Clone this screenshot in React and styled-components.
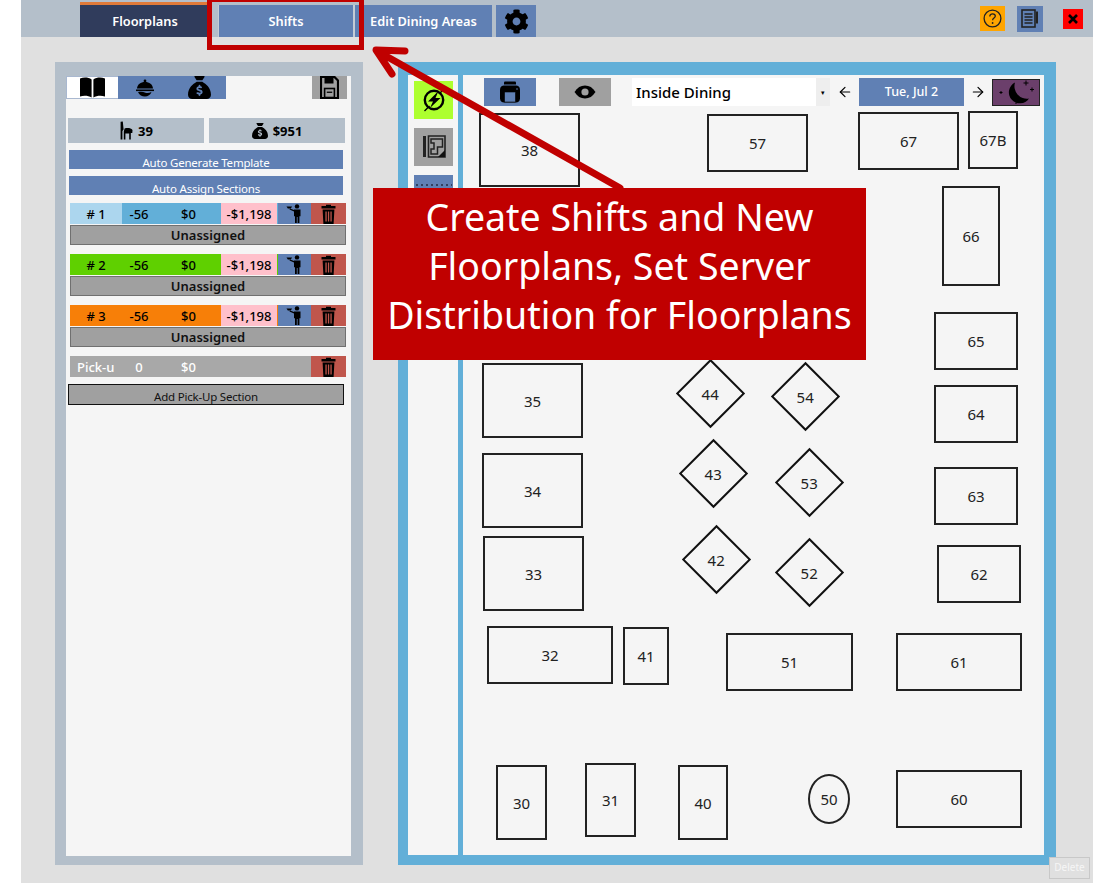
import styled, { createGlobalStyle } from 'styled-components';
import { FaCog } from 'react-icons/fa';
import { FaSackDollar } from 'react-icons/fa6';
import { ArrowLeft, ArrowRight } from 'lucide-react';

const GlobalStyle = createGlobalStyle`
  html, body {
    margin: 0;
    padding: 0;
    background: #ffffff;
    font-family: "Noto Sans", "Open Sans", sans-serif;
  }
  * { box-sizing: border-box; }
`;

const blue = '#6080b4';
const slate = '#b4bfca';
const paper = '#f5f5f5';
const sky = '#62afd8';
const red = '#c00000';

const Root = styled.div`
  position: relative;
  width: 1114px;
  height: 883px;
  padding: 0 21px;
  overflow: hidden;
`;

const Frame = styled.div`
  display: flex;
  flex-direction: column;
  height: 100%;
  background: #e0e0e0;
`;

const TopBar = styled.div`
  display: flex;
  align-items: flex-end;
  flex: none;
  height: 37px;
  padding-left: 59px;
  background: ${slate};
`;

const Tab = styled.div`
  display: flex;
  align-items: center;
  justify-content: center;
  width: ${p => p.$w}px;
  margin-left: ${p => p.$ml || 0}px;
  font-size: 12.8px;
  font-weight: 600;
  color: #ffffff;
  background: ${p => (p.$active ? '#303c5c' : blue)};
  border-top: ${p => (p.$active ? '3px solid #e07a3a' : 'none')};
  height: ${p => (p.$active ? 35 : 32)}px;
  border-left: ${p => (p.$framed ? '1px solid #c4ccd6' : 'none')};
  border-right: ${p => (p.$framed ? '2px solid #c4ccd6' : 'none')};
`;

const GearTab = styled(Tab)`
  color: #000000;
  font-size: 25px;
`;

const RightTools = styled.div`
  display: flex;
  align-items: center;
  align-self: stretch;
  margin-left: auto;
  padding-right: 10px;
`;

const ToolButton = styled.div`
  display: flex;
  align-items: center;
  justify-content: center;
  width: ${p => p.$size}px;
  height: ${p => p.$size}px;
  margin-left: ${p => p.$ml}px;
  background: ${p => p.$bg};
`;

const Workspace = styled.div`
  display: flex;
  flex: 1;
  gap: 35px;
  padding: 25px 37px 18px 34px;
  min-height: 0;
`;

const LeftPanel = styled.div`
  width: 308px;
  padding: 14px 12px 9px 11px;
  background: ${slate};
`;

const LeftInner = styled.div`
  height: 100%;
  background: ${paper};
`;

const TabRow = styled.div`
  display: flex;
  height: 23px;
  padding-right: 4px;
`;

const BookTab = styled.div`
  display: flex;
  align-items: center;
  justify-content: center;
  width: 52px;
  background: #ffffff;
  border: 1px solid #a9b8d0;
  border-right: none;
`;

const IconTabs = styled.div`
  display: flex;
  align-items: center;
  width: 108px;
  background: ${blue};
`;

const IconTab = styled.div`
  display: flex;
  justify-content: center;
  width: 54px;
  font-size: 23px;
  color: #000000;
`;

const SaveButton = styled.div`
  display: flex;
  align-items: center;
  justify-content: center;
  width: 35px;
  margin-left: auto;
  background: #a0a0a0;
`;

const StatsRow = styled.div`
  display: flex;
  gap: 5px;
  margin: 19px 6px 0 2px;
`;

const Stat = styled.div`
  display: flex;
  flex: 1;
  align-items: center;
  justify-content: center;
  gap: 5px;
  height: 25px;
  font-size: 13px;
  font-weight: 700;
  color: #000000;
  background: ${slate};
`;

const ActionButton = styled.div`
  width: 274px;
  height: 19px;
  margin: 7px 0 0 3px;
  overflow: hidden;
  font-size: 11.5px;
  letter-spacing: -0.2px;
  line-height: 25px;
  text-align: center;
  color: #ffffff;
  background: ${blue};
`;

const Sections = styled.div`
  display: flex;
  flex-direction: column;
  gap: 9px;
  margin: 8px 0 0 4px;
  width: 276px;
`;

const SectionRow = styled.div`
  display: grid;
  grid-template-columns: 52px 34px 65px 56px 1px 33px 35px;
  height: 21px;
  font-size: 13px;
  font-weight: 500;
  color: ${p => p.$fg || '#000000'};
  background: ${p => p.$bg};
`;

const Cell = styled.div`
  display: flex;
  align-items: center;
  justify-content: ${p => p.$align || 'center'};
  padding-left: ${p => p.$pl || 0}px;
  overflow: hidden;
  white-space: nowrap;
  background: ${p => p.$bg || 'transparent'};
`;

const AssignBar = styled.div`
  height: 20px;
  margin-top: 1px;
  font-size: 13px;
  font-weight: 600;
  line-height: 19px;
  text-align: center;
  color: #111111;
  background: #a0a0a0;
  border: 1px solid #707070;
`;

const AddButton = styled.div`
  width: 276px;
  height: 21px;
  margin: 7px 0 0 2px;
  overflow: hidden;
  font-size: 11.5px;
  letter-spacing: -0.2px;
  line-height: 24px;
  text-align: center;
  color: #111111;
  background: #a0a0a0;
  border: 1px solid #111111;
`;

const RightPanel = styled.div`
  display: flex;
  gap: 5px;
  width: 658px;
  padding: 13px 12px 10px 10px;
  background: ${sky};
`;

const SideColumn = styled.div`
  display: flex;
  flex-direction: column;
  gap: 9px;
  width: 50px;
  padding: 6px 0 0 6px;
  background: ${paper};
`;

const SideButton = styled.div`
  display: flex;
  align-items: center;
  justify-content: center;
  width: 39px;
  height: 38px;
  background: ${p => p.$bg};
`;

const SideStub = styled(SideButton)`
  align-items: flex-start;
  padding-top: 9px;
`;

const StubText = styled.div`
  width: 36px;
  height: 2px;
  background: repeating-linear-gradient(90deg, #33415f 0 2px, transparent 2px 5px);
`;

const Canvas = styled.div`
  display: flex;
  flex: 1;
  flex-direction: column;
  background: ${paper};
`;

const Toolbar = styled.div`
  display: flex;
  flex: none;
  align-items: center;
  height: 32px;
  padding: 3px 0 1px 21px;
`;

const BarButton = styled.div`
  display: flex;
  align-items: center;
  justify-content: center;
  width: 52px;
  height: 28px;
  margin-left: ${p => p.$ml || 0}px;
  background: ${p => p.$bg};
`;

const AreaSelect = styled.div`
  display: flex;
  align-items: center;
  justify-content: space-between;
  width: 198px;
  height: 28px;
  margin-left: 21px;
  padding-left: 4px;
  font-size: 15px;
  font-weight: 500;
  color: #000000;
  background: #ffffff;
`;

const SelectCaret = styled.div`
  display: flex;
  align-items: center;
  justify-content: center;
  align-self: stretch;
  width: 14px;
  font-size: 7px;
  background: #eeeeee;
`;

const StepArrow = styled.div`
  display: flex;
  justify-content: center;
  width: ${p => p.$w}px;
  color: #000000;
`;

const DateButton = styled.div`
  width: 105px;
  height: 28px;
  font-size: 12.5px;
  font-weight: 500;
  line-height: 28px;
  text-align: center;
  color: #ffffff;
  background: ${blue};
`;

const NightButton = styled.div`
  display: flex;
  align-items: center;
  justify-content: center;
  width: 48px;
  height: 27px;
  background: #6b3f6b;
  border: 1px solid #222222;
`;

const Floor = styled.div`
  position: relative;
  flex: 1;
`;

const Table = styled.div`
  position: absolute;
  left: ${p => p.$x}px;
  top: ${p => p.$y}px;
  display: flex;
  align-items: center;
  justify-content: center;
  width: ${p => p.$w}px;
  height: ${p => p.$h}px;
  font-size: 15px;
  color: #222222;
  border: 2px solid #222222;
  border-radius: ${p => (p.$round ? '50%' : '0')};
`;

const Diamond = styled.div`
  position: absolute;
  left: ${p => p.$x - 24.5}px;
  top: ${p => p.$y - 24.5}px;
  display: flex;
  align-items: center;
  justify-content: center;
  width: 49px;
  height: 49px;
  border: 2px solid #111111;
  transform: rotate(45deg);
`;

const DiamondLabel = styled.span`
  font-size: 15px;
  color: #222222;
  transform: rotate(-45deg);
`;

const Callout = styled.div`
  position: absolute;
  left: 373px;
  top: 188px;
  display: flex;
  align-items: center;
  justify-content: center;
  width: 493px;
  height: 172px;
  padding-bottom: 18px;
  font-size: 37.5px;
  line-height: 49px;
  text-align: center;
  color: #ffffff;
  background: ${red};
`;

const HighlightBox = styled.div`
  position: absolute;
  left: 207px;
  top: -3px;
  width: 157px;
  height: 53px;
  border: 5px solid ${red};
`;

const ArrowLayer = styled.svg`
  position: absolute;
  left: 0;
  top: 0;
  pointer-events: none;
`;

const DeleteButton = styled.div`
  position: absolute;
  left: 1049px;
  top: 857px;
  width: 41px;
  height: 22px;
  font-size: 10px;
  line-height: 19px;
  text-align: center;
  color: #f6f6f6;
  background: #e0e0e0;
  border: 1px solid #c8c8c8;
`;

const FLOOR_X = 463;
const FLOOR_Y = 108;

const tables = [
  ['38', 479, 114, 101, 74],
  ['57', 707, 115, 101, 58],
  ['67', 858, 113, 101, 58],
  ['67B', 968, 112, 50, 58],
  ['66', 942, 187, 58, 100],
  ['65', 934, 313, 84, 58],
  ['64', 934, 386, 84, 58],
  ['63', 934, 468, 84, 58],
  ['62', 937, 546, 84, 58],
  ['61', 896, 634, 126, 58],
  ['60', 896, 771, 126, 58],
  ['51', 726, 634, 127, 58],
  ['41', 623, 628, 46, 58],
  ['32', 487, 627, 126, 58],
  ['33', 483, 537, 101, 75],
  ['34', 482, 454, 101, 75],
  ['35', 482, 364, 101, 75],
  ['30', 496, 766, 51, 75],
  ['31', 585, 764, 51, 74],
  ['40', 678, 766, 50, 75],
];

const diamonds = [
  ['44', 710, 394],
  ['54', 805, 397],
  ['43', 713, 474],
  ['53', 809, 483],
  ['42', 716, 560],
  ['52', 809, 573],
];

const sections = [
  { label: '# 1', bg: sky, labelBg: '#acd6ee' },
  { label: '# 2', bg: '#5fd000' },
  { label: '# 3', bg: '#f77f08' },
];

const BookIcon = () => (
  <svg width="27" height="21" viewBox="0 0 27 21">
    <path d="M1 1.5C5 0 9.5 .3 12.6 2.5V20.5C9.5 18.6 5 18.4 1 19.4Z" fill="#000" />
    <path d="M26 1.5C22 0 17.5 .3 14.4 2.5V20.5C17.5 18.6 22 18.4 26 19.4Z" fill="#000" />
  </svg>
);

const ClocheIcon = () => (
  <svg width="20" height="20" viewBox="0 0 20 20">
    <circle cx="10" cy="3" r="1.4" fill="#000" />
    <path d="M2 10.5C2.4 6.3 5.6 4 10 4s7.6 2.3 8 6.5Z" fill="#000" />
    <rect x="1" y="11.5" width="18" height="1.6" fill="#000" />
    <path d="M3 14.2c3-.8 5-.4 7.5.5 2 .7 3.8.3 6-.7-1 2.8-3.6 4.5-6.6 4.5-3 0-5.6-1.6-6.9-4.3Z" fill="#000" />
  </svg>
);

const SaveIcon = () => (
  <svg width="19" height="23" viewBox="0 0 19 23">
    <path d="M2 1h12.5L18 4.5V22H1V1Z" fill="none" stroke="#000" strokeWidth="2.2" />
    <path d="M4.5 1h9v6.5h-9Z" fill="#000" />
    <rect x="4.6" y="12.5" width="9.8" height="9" fill="none" stroke="#000" strokeWidth="1.6" />
    <rect x="6.8" y="15.6" width="5.4" height="1.3" fill="#000" />
  </svg>
);

const ChairIcon = () => (
  <svg width="14" height="19" viewBox="0 0 14 19">
    <path d="M1.6.8 3.8.4 4.6 8.4 3.4 10V18.6H1.6V9.6Z" fill="#000" />
    <path d="M5.6 7.6c3-1 6.4-.4 7.9 1.4l-.2 3H11.8V18.6h-1.6V12.4H6.4v6.2H4.8V10.4Z" fill="#000" />
  </svg>
);

const TrashIcon = () => (
  <svg width="15" height="20" viewBox="0 0 15 20">
    <path d="M5 2V.8h5V2h4.5v2.4H.5V2Z" fill="#000" />
    <path d="M1.6 5.4h11.8L12.6 20H2.4ZM4.4 7.6v10h1.3v-10ZM6.9 7.6v10h1.3v-10ZM9.4 7.6v10h1.3v-10Z" fill="#000" fillRule="evenodd" />
  </svg>
);

const PrintIcon = () => (
  <svg width="22" height="22" viewBox="0 0 22 22">
    <path d="M5 1.5C5 .8 5.6.4 6.3.4h9.4c.7 0 1.3.4 1.3 1.1V3.4H5Z" fill="#000" />
    <path d="M1 8.5C1 6 3 4.6 5 4.6h12c2 0 4 1.4 4 3.9v9c0 2.4-1.9 4-4 4H5c-2.1 0-4-1.6-4-4Z" fill="#000" />
    <rect x="5.5" y="11" width="11" height="10" fill="#6080b4" stroke="#000" strokeWidth=".6" />
    <circle cx="18" cy="8" r=".8" fill="#6080b4" />
  </svg>
);

const EyeIcon = () => (
  <svg width="22" height="14" viewBox="0 0 22 14">
    <path d="M.5 7C3.2 2.6 6.8.5 11 .5s7.8 2.1 10.5 6.5c-2.7 4.4-6.3 6.5-10.5 6.5S3.2 11.4.5 7Z" fill="#000" />
    <circle cx="11" cy="7" r="3.6" fill="#a0a0a0" />
  </svg>
);

const BoltIcon = () => (
  <svg width="26" height="28" viewBox="0 0 26 28">
    <circle cx="13" cy="14" r="9.2" fill="none" stroke="#000" strokeWidth="2.4" />
    <path d="M17.5 5 7 15.5h5L9 22 19.5 12h-5Z" fill="#000" />
    <path d="M3.5 25 8.5 20M18 8 23 3" stroke="#000" strokeWidth="1.4" />
  </svg>
);

const PlanIcon = () => (
  <svg width="24" height="26" viewBox="0 0 24 26">
    <rect x="1" y="2" width="3" height="21" fill="#222" />
    <path d="M6.5 2h16.5v21H6.5Z" fill="none" stroke="#222" strokeWidth="1.6" />
    <path d="M9 5h11.5v8h-5v7H9v-5h3V9H9Z" fill="none" stroke="#222" strokeWidth="1.5" />
    <path d="M23 16v7h-7Z" fill="#111" />
  </svg>
);

const MoonIcon = () => (
  <svg width="46" height="25" viewBox="0 0 46 25">
    <path d="M22 2.5a11 11 0 1 0 14 16 12.5 12.5 0 0 1-14-16Z" fill="#000" />
    <path d="M33 .5v5M30.5 3h5M39 7.5v4M37 9.500h4M8 11v3M6.500 12.500h3M23 22.500v1.500" stroke="#000" strokeWidth="1" />
  </svg>
);

const HelpIcon = () => (
  <svg width="19" height="19" viewBox="0 0 19 19">
    <circle cx="9.5" cy="9.5" r="8.4" fill="none" stroke="#222" strokeWidth="1.3" />
    <path d="M6.8 7.4c0-1.6 1.2-2.6 2.8-2.6s2.7 1 2.7 2.3c0 2-2.7 2-2.7 4.2" fill="none" stroke="#222" strokeWidth="1.3" />
    <circle cx="9.6" cy="14" r=".9" fill="#222" />
  </svg>
);

const NotesIcon = () => (
  <svg width="20" height="21" viewBox="0 0 20 21">
    <rect x="2" y="2" width="13" height="17" fill="none" stroke="#222" strokeWidth="1.6" />
    <path d="M4.5 6h8M4.5 9h8M4.5 12h8M4.5 15h8" stroke="#222" strokeWidth="1.4" />
    <path d="M17 3.5v12" stroke="#222" strokeWidth="2" />
  </svg>
);

const CloseIcon = () => (
  <svg width="10" height="10" viewBox="0 0 10 10">
    <path d="M1 1 9 9M9 1 1 9" stroke="#000" strokeWidth="2.6" />
  </svg>
);

const ServerIcon = () => (
  <svg width="18" height="19" viewBox="0 0 18 19">
    <circle cx="11" cy="2.4" r="2.2" fill="#000" />
    <path d="M8 5.4h6.5v6.8h-1.1V19h-1.8v-6h-.8v6H9v-6.8H8Z" fill="#000" />
    <path d="M8 6 4 4.4l-.5 1.2 4.5 2Z" fill="#000" />
    <path d="M.5 2.4h5.6L4.8 4.6H1.8Z" fill="#000" />
  </svg>
);

function SectionCard({ section }) {
  return (
    <div>
      <SectionRow $bg={section.bg}>
        <Cell $bg={section.labelBg}>{section.label}</Cell>
        <Cell>-56</Cell>
        <Cell>$0</Cell>
        <Cell $bg="#ffc0cb">-$1,198</Cell>
        <span />
        <Cell $bg={blue}>
          <ServerIcon />
        </Cell>
        <Cell $bg="#c0564c">
          <TrashIcon />
        </Cell>
      </SectionRow>
      <AssignBar>Unassigned</AssignBar>
    </div>
  );
}

export default function App() {
  return (
    <Root>
      <GlobalStyle />
      <Frame>
        <TopBar>
          <Tab $w={130} $active>Floorplans</Tab>
          <Tab $w={137} $ml={8} $framed>Shifts</Tab>
          <Tab $w={137}>Edit Dining Areas</Tab>
          <GearTab $w={40} $ml={4}>
            <FaCog />
          </GearTab>
          <RightTools>
            <ToolButton $size={25} $ml={0} $bg="#ffa500">
              <HelpIcon />
            </ToolButton>
            <ToolButton $size={26} $ml={12} $bg={blue}>
              <NotesIcon />
            </ToolButton>
            <ToolButton $size={20} $ml={20} $bg="#ff0000">
              <CloseIcon />
            </ToolButton>
          </RightTools>
        </TopBar>

        <Workspace>
          <LeftPanel>
            <LeftInner>
              <TabRow>
                <BookTab>
                  <BookIcon />
                </BookTab>
                <IconTabs>
                  <IconTab>
                    <ClocheIcon />
                  </IconTab>
                  <IconTab>
                    <FaSackDollar />
                  </IconTab>
                </IconTabs>
                <SaveButton>
                  <SaveIcon />
                </SaveButton>
              </TabRow>
              <StatsRow>
                <Stat>
                  <ChairIcon /> 39
                </Stat>
                <Stat>
                  <FaSackDollar size={16} /> $951
                </Stat>
              </StatsRow>
              <ActionButton>Auto Generate Template</ActionButton>
              <ActionButton>Auto Assign Sections</ActionButton>
              <Sections>
                {sections.map(s => (
                  <SectionCard key={s.label} section={s} />
                ))}
                <SectionRow $bg="#a8a8a8" $fg="#ffffff">
                  <Cell $align="flex-start" $pl={7}>Pick-u</Cell>
                  <Cell>0</Cell>
                  <Cell>$0</Cell>
                  <Cell />
                  <span />
                  <Cell />
                  <Cell $bg="#c0564c">
                    <TrashIcon />
                  </Cell>
                </SectionRow>
              </Sections>
              <AddButton>Add Pick-Up Section</AddButton>
            </LeftInner>
          </LeftPanel>

          <RightPanel>
            <SideColumn>
              <SideButton $bg="#adff2f">
                <BoltIcon />
              </SideButton>
              <SideButton $bg="#a0a0a0">
                <PlanIcon />
              </SideButton>
              <SideStub $bg={blue}>
                <StubText />
              </SideStub>
            </SideColumn>
            <Canvas>
              <Toolbar>
                <BarButton $bg={blue}>
                  <PrintIcon />
                </BarButton>
                <BarButton $bg="#a0a0a0" $ml={23}>
                  <EyeIcon />
                </BarButton>
                <AreaSelect>
                  Inside Dining
                  <SelectCaret>▾</SelectCaret>
                </AreaSelect>
                <StepArrow $w={29}>
                  <ArrowLeft size={16} strokeWidth={1.8} />
                </StepArrow>
                <DateButton>Tue, Jul 2</DateButton>
                <StepArrow $w={28}>
                  <ArrowRight size={16} strokeWidth={1.8} />
                </StepArrow>
                <NightButton>
                  <MoonIcon />
                </NightButton>
              </Toolbar>
              <Floor>
                {tables.map(([name, x, y, w, h]) => (
                  <Table key={name} $x={x - FLOOR_X} $y={y - FLOOR_Y} $w={w} $h={h}>
                    {name}
                  </Table>
                ))}
                <Table $round $x={808 - FLOOR_X} $y={775 - FLOOR_Y} $w={42} $h={50}>
                  50
                </Table>
                {diamonds.map(([name, x, y]) => (
                  <Diamond key={name} $x={x - FLOOR_X} $y={y - FLOOR_Y}>
                    <DiamondLabel>{name}</DiamondLabel>
                  </Diamond>
                ))}
              </Floor>
            </Canvas>
          </RightPanel>
        </Workspace>
      </Frame>

      <DeleteButton>Delete</DeleteButton>
      <HighlightBox />
      <ArrowLayer width="1114" height="883">
        <path
          d="M620 188 377 51M405 51 376 50 392 74"
          fill="none"
          stroke={red}
          strokeWidth="7"
          strokeLinecap="round"
          strokeLinejoin="round"
        />
      </ArrowLayer>
      <Callout>
        Create Shifts and New
        <br />
        Floorplans, Set Server
        <br />
        Distribution for Floorplans
      </Callout>
    </Root>
  );
}
